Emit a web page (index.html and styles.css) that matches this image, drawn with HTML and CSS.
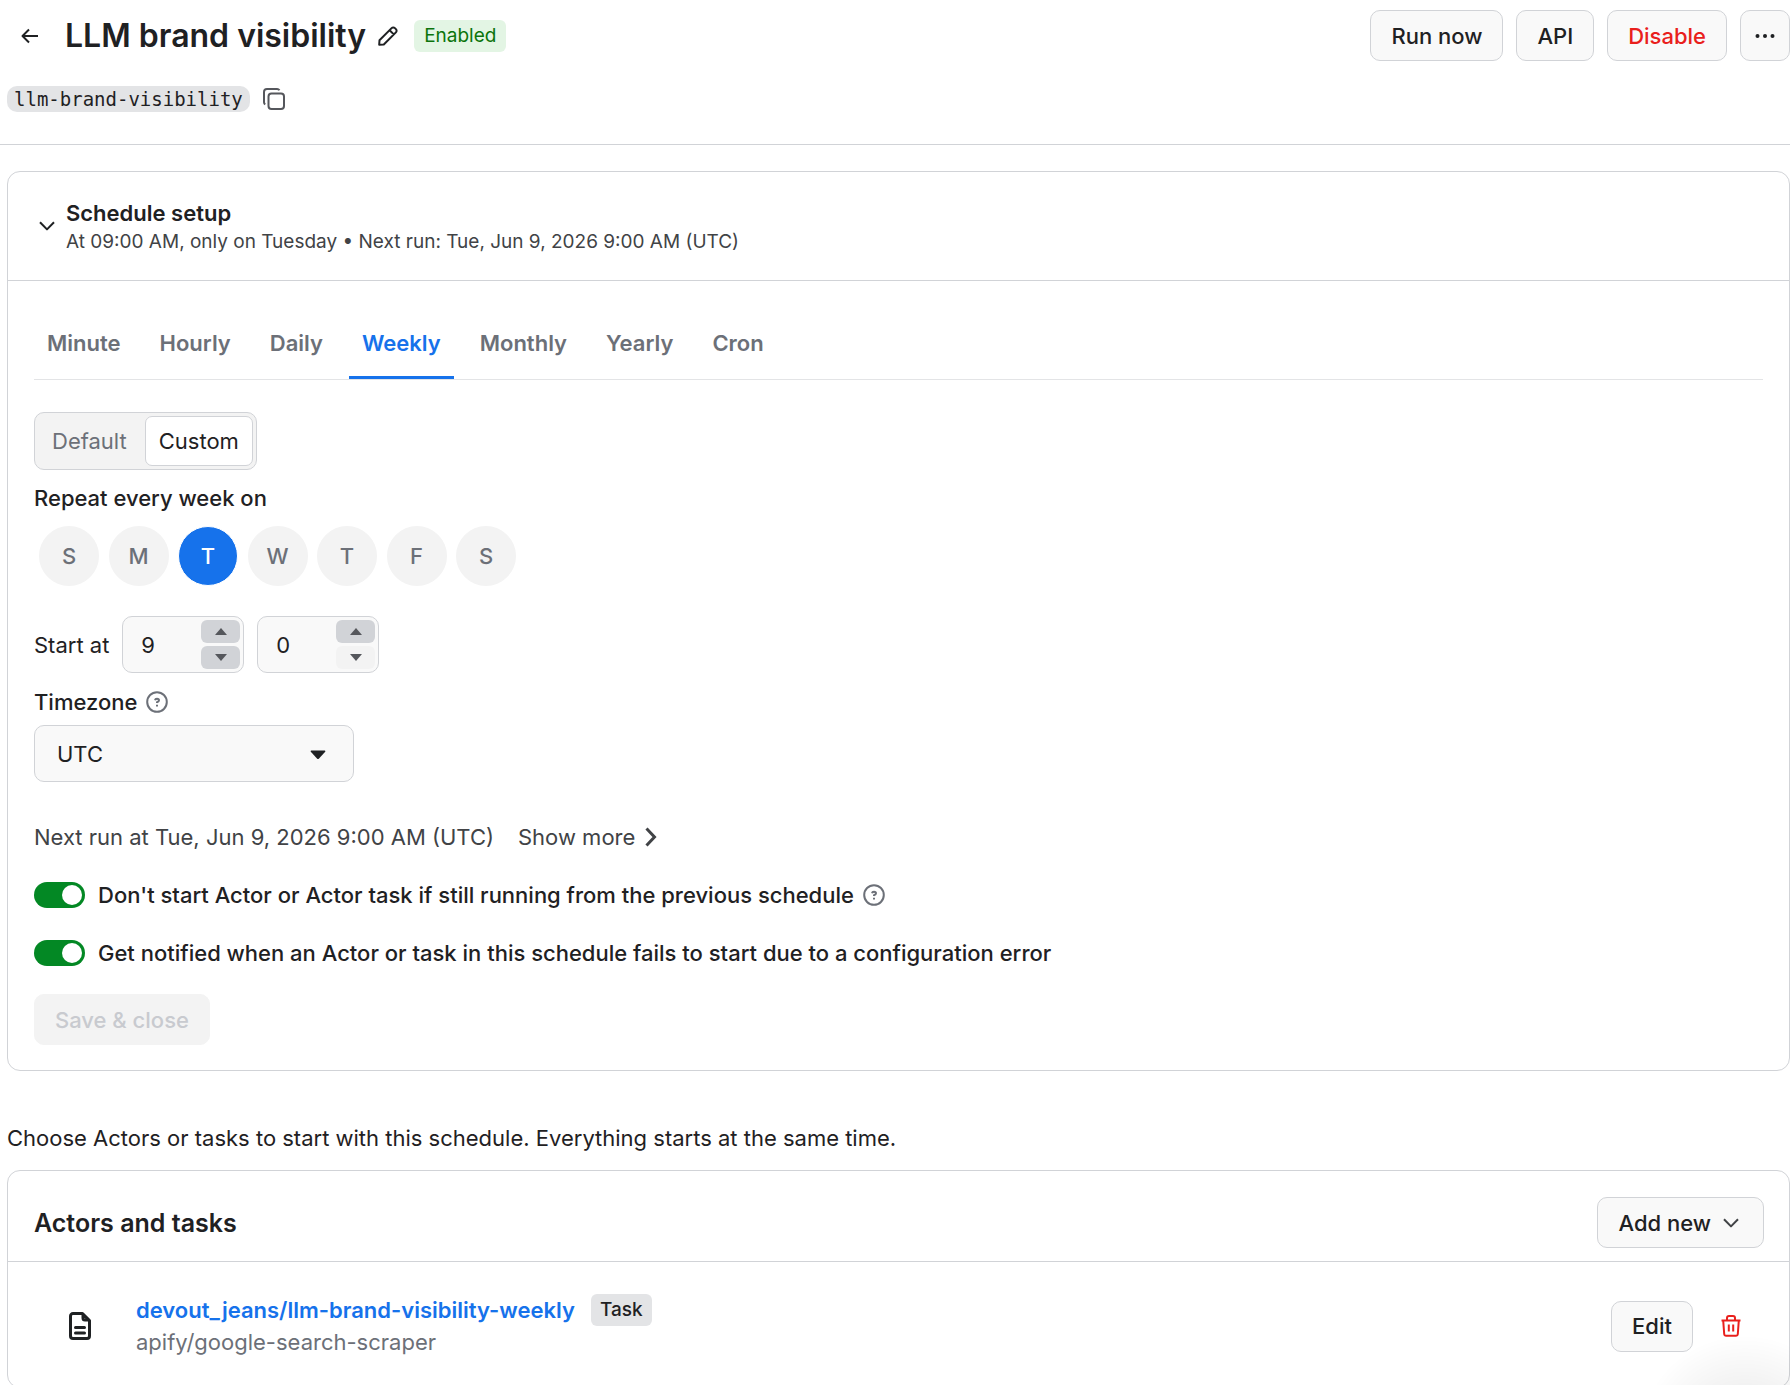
FILE: index.html
```html
<!DOCTYPE html>
<html lang="en">
<head>
    <meta charset="UTF-8">
    <meta name="viewport" content="width=device-width, initial-scale=1.0">
    <title>LLM brand visibility</title>
    <link rel="stylesheet" href="styles.css">
</head>
<body>
    <header class="page-header">
        <div class="header-row">
            <a class="back-link" href="#" aria-label="Back">
                <svg width="18" height="16" viewBox="0 0 18 16"><path d="M17 8H1.500M8 1.500L1.500 8L8 14.500"/></svg>
            </a>
            <h1>LLM brand visibility</h1>
            <button class="icon-btn edit-name" aria-label="Rename">
                <svg width="20" height="20" viewBox="0 0 20 20"><path d="M1.200 18.800L1.500 14.200L13.600 2.100a2.300 2.300 0 0 1 3.300 0l1 1a2.300 2.300 0 0 1 0 3.300L5.800 18.500ZM11.600 4.200L15.800 8.400"/></svg>
            </button>
            <span class="badge badge-enabled">Enabled</span>
            <div class="header-actions">
                <button class="btn">Run now</button>
                <button class="btn">API</button>
                <button class="btn btn-danger">Disable</button>
                <button class="btn btn-more" aria-label="More">
                    <svg width="20" height="6" viewBox="0 0 20 6"><circle cx="2.500" cy="3" r="2"/><circle cx="10" cy="3" r="2"/><circle cx="17.500" cy="3" r="2"/></svg>
                </button>
            </div>
        </div>
        <div class="slug-row">
            <code>llm-brand-visibility</code>
            <button class="icon-btn" aria-label="Copy">
                <svg width="22" height="22" viewBox="0 0 22 22"><rect x="5.500" y="5.500" width="15.500" height="15.500" rx="3"/><path d="M2.200 16.500A3 3 0 0 1 1 14V4a3 3 0 0 1 3-3h10a3 3 0 0 1 2.500 1.300"/></svg>
            </button>
        </div>
    </header>

    <main>
        <section class="card">
            <div class="card-header setup-header">
                <svg class="chevron" width="16" height="10" viewBox="0 0 16 10"><path d="M1 1.200L8 8.400L15 1.200"/></svg>
                <div>
                    <h2 class="setup-title">Schedule setup</h2>
                    <p class="setup-info">At 09:00 AM, only on Tuesday • Next run: Tue, Jun 9, 2026 9:00 AM (UTC)</p>
                </div>
            </div>
            <div class="setup-body">
                <nav class="tabs">
                    <a href="#" class="tab">Minute</a>
                    <a href="#" class="tab">Hourly</a>
                    <a href="#" class="tab">Daily</a>
                    <a href="#" class="tab active">Weekly</a>
                    <a href="#" class="tab">Monthly</a>
                    <a href="#" class="tab">Yearly</a>
                    <a href="#" class="tab">Cron</a>
                </nav>

                <div class="segmented">
                    <button class="segment">Default</button>
                    <button class="segment selected">Custom</button>
                </div>

                <h3 class="field-title">Repeat every week on</h3>
                <div class="days">
                    <button class="day">S</button>
                    <button class="day">M</button>
                    <button class="day selected">T</button>
                    <button class="day">W</button>
                    <button class="day">T</button>
                    <button class="day">F</button>
                    <button class="day">S</button>
                </div>

                <div class="start-at">
                    <label for="hour">Start at</label>
                    <div class="stepper">
                        <input type="number" id="hour" value="9" min="0" max="23">
                        <div class="stepper-btns">
                            <button data-step="1" aria-label="Increase hour"><svg width="12" height="7" viewBox="0 0 12 7"><path d="M0 7L6 0L12 7Z"/></svg></button>
                            <button data-step="-1" aria-label="Decrease hour"><svg width="12" height="7" viewBox="0 0 12 7"><path d="M0 0L6 7L12 0Z"/></svg></button>
                        </div>
                    </div>
                    <div class="stepper">
                        <input type="number" id="minute" aria-label="Minute" value="0" min="0" max="59">
                        <div class="stepper-btns">
                            <button data-step="1" aria-label="Increase minute"><svg width="12" height="7" viewBox="0 0 12 7"><path d="M0 7L6 0L12 7Z"/></svg></button>
                            <button data-step="-1" aria-label="Decrease minute" disabled><svg width="12" height="7" viewBox="0 0 12 7"><path d="M0 0L6 7L12 0Z"/></svg></button>
                        </div>
                    </div>
                </div>

                <div class="field-label">
                    <label for="timezone">Timezone</label>
                    <svg class="help" width="22" height="22" viewBox="0 0 22 22"><circle cx="11" cy="11" r="9.800"/><path d="M9 9.200Q9.300 7.800 11 7.800Q13 7.800 13 9.300Q13 10.600 11 11.300V12M11 13.800v1.800"/></svg>
                </div>
                <div class="select">
                    <select id="timezone">
                        <option>UTC</option>
                    </select>
                    <svg class="caret" width="16" height="10" viewBox="0 0 16 10"><path d="M1.200 0.500h13.600q1 .3.400 1.200L8.800 8.700q-.8.800-1.600 0L.8 1.700q-.6-.9.400-1.200Z"/></svg>
                </div>

                <div class="next-run">
                    <span>Next run at Tue, Jun 9, 2026 9:00 AM (UTC)</span>
                    <button class="show-more">Show more
                        <svg width="12" height="20" viewBox="0 0 12 20"><path d="M1.500 1.500L9.500 10L1.500 18.500"/></svg>
                    </button>
                </div>

                <div class="toggle-row">
                    <input type="checkbox" class="toggle" id="exclusive" checked>
                    <label for="exclusive">Don't start Actor or Actor task if still running from the previous schedule</label>
                    <svg class="help" width="22" height="22" viewBox="0 0 22 22"><circle cx="11" cy="11" r="9.800"/><path d="M9 9.200Q9.300 7.800 11 7.800Q13 7.800 13 9.300Q13 10.600 11 11.300V12M11 13.800v1.800"/></svg>
                </div>
                <div class="toggle-row">
                    <input type="checkbox" class="toggle" id="notify" checked>
                    <label for="notify">Get notified when an Actor or task in this schedule fails to start due to a configuration error</label>
                </div>

                <button class="btn btn-save" disabled>Save &amp; close</button>
            </div>
        </section>

        <p class="intro">Choose Actors or tasks to start with this schedule. Everything starts at the same time.</p>

        <section class="card">
            <div class="card-header tasks-header">
                <h2>Actors and tasks</h2>
                <button class="btn">Add new
                    <svg class="chevron" width="16" height="10" viewBox="0 0 16 10"><path d="M1 1.200L8 8.400L15 1.200"/></svg>
                </button>
            </div>
            <div class="task-row">
                <svg class="doc" width="22" height="28" viewBox="0 0 22 28"><path d="M13.500 1.500H4a2.500 2.500 0 0 0-2.500 2.500v20A2.500 2.500 0 0 0 4 26.500h14a2.500 2.500 0 0 0 2.500-2.500V8.500ZM14 2v4a2 2 0 0 0 2 2h4M6.500 15.500h9M6.500 21h9"/></svg>
                <div class="task-info">
                    <div class="task-name">
                        <a href="#">devout_jeans/llm-brand-visibility-weekly</a>
                        <span class="badge">Task</span>
                    </div>
                    <p>apify/google-search-scraper</p>
                </div>
                <button class="btn">Edit</button>
                <button class="icon-btn delete" aria-label="Delete">
                    <svg width="20" height="22" viewBox="0 0 20 22"><path d="M.5 5.500h19M6 5V3a2 2 0 0 1 2-2h4a2 2 0 0 1 2 2v2M2.200 5.500l1 13.500a2 2 0 0 0 2 1.800h9.600a2 2 0 0 0 2-1.800l1-13.500M7.800 9.500v7M12.200 9.500v7"/></svg>
                </button>
            </div>
        </section>
    </main>

    <div class="chat-shadow"></div>

    <script>
        document.querySelectorAll('[data-step]').forEach(button => {
            button.addEventListener('click', () => {
                const input = button.closest('.stepper').querySelector('input');
                const next = Number(input.value) + Number(button.dataset.step);
                if (next < input.min || next > input.max) return
                input.value = next;
                button.parentElement.querySelector('[data-step="-1"]').disabled = next === 0;
            })
        })
    </script>
</body>
</html>
```

FILE: styles.css
```css
* {
    box-sizing: border-box;
}
html {
    overflow: hidden;
}
body {
    margin: 0;
    background: #fff;
    color: #1f2123;
    font-family: Inter, sans-serif;
    font-size: 22px;
    line-height: 32px;
}
h1, h2, h3, p {
    margin: 0;
}
a {
    text-decoration: none;
}
button, input, select {
    font: inherit;
    color: inherit;
}
button {
    cursor: pointer;
}
svg {
    flex: none;
    fill: none;
    stroke: currentColor;
    stroke-width: 2;
    stroke-linejoin: round;
}

/* header */
.page-header {
    padding: 10px 0 32px 7px;
    border-bottom: 1px solid #d1d3d7;
}
.header-row {
    display: flex;
    align-items: center;
}
.back-link {
    display: flex;
    color: inherit;
    margin: 0 26px 0 14px;
}
h1 {
    font-size: 32px;
    line-height: 40px;
    font-weight: 600;
}
.icon-btn {
    display: flex;
    padding: 0;
    border: 0;
    background: none;
}
.edit-name {
    margin: 0 16px 0 12px;
}
.badge {
    padding: 0 9px;
    border-radius: 6px;
    background: #e3e4e6;
    font-size: 19px;
}
.badge-enabled {
    padding: 0 10px;
    background: #e3f5e4;
    color: #0b740b;
}
.header-actions {
    display: flex;
    gap: 13px;
    margin-left: auto;
}
.btn {
    display: flex;
    align-items: center;
    gap: 12px;
    height: 51px;
    padding: 0 20px;
    border: 1px solid #d1d3d7;
    border-radius: 10px;
    background: #f9f9f9;
    font-weight: 500;
}
.btn-danger {
    color: #e9201c;
}
.btn-more {
    padding: 0 14px;
}
.btn-more svg {
    fill: currentColor;
    stroke: none;
}
.slug-row {
    display: flex;
    align-items: center;
    gap: 13px;
    margin-top: 25px;
    color: #55575c;
}
code {
    padding: 0 7px;
    border-radius: 10px;
    background: #e3e4e6;
    color: #1f2123;
    font-family: "DejaVu Sans Mono", monospace;
    font-size: 19px;
    line-height: 26px;
}

/* cards */
main {
    padding: 26px 0 0 7px;
}
.card {
    border: 1px solid #d1d3d7;
    border-radius: 13px;
}
.card-header {
    display: flex;
    align-items: center;
    padding: 25px;
    border-bottom: 1px solid #d1d3d7;
}
.setup-header {
    gap: 11px;
    padding-left: 31px;
}
.setup-title {
    font-size: 22px;
    line-height: 32px;
    font-weight: 600;
}
.setup-info {
    font-size: 19px;
    line-height: 26px;
    color: #414346;
}
.setup-body {
    padding: 32px 26px 25px;
}

.tabs {
    display: flex;
    gap: 13px;
    border-bottom: 1px solid #e3e4e6;
}
.tab {
    padding: 14px 13px 17px;
    border-bottom: 3px solid transparent;
    color: #6c7078;
    font-weight: 600;
}
.tab.active {
    border-color: #1672eb;
    color: #1672eb;
}

.segmented {
    display: flex;
    gap: 4px;
    width: fit-content;
    margin-top: 32px;
    padding: 3px;
    border: 1px solid #d1d3d7;
    border-radius: 10px;
    background: #f3f3f3;
}
.segment {
    height: 50px;
    padding: 0 13px;
    border: 1px solid transparent;
    border-radius: 7px;
    background: none;
    color: #6c7078;
}
.segment.selected {
    border-color: #d1d3d7;
    background: #fff;
    color: #1f2123;
}
.field-title {
    margin-top: 12px;
    font-size: 22px;
    font-weight: 500;
}
.days {
    display: flex;
    justify-content: space-between;
    width: 477px;
    margin: 12px 0 0 5px;
}
.day {
    width: 60px;
    height: 60px;
    padding: 0;
    border: 1px solid #f3f3f3;
    border-radius: 50%;
    background: #f3f3f3;
    color: #6c7078;
    font-weight: 500;
}
.day.selected {
    border-color: #fff;
    background: #1672eb;
    color: #fff;
}

.start-at {
    display: flex;
    align-items: center;
    gap: 13px;
    margin-top: 30px;
}
.stepper {
    display: flex;
    width: 122px;
    height: 57px;
    padding: 3px 3px 3px 18px;
    border: 1px solid #d1d3d7;
    border-radius: 10px;
    background: #f9f9f9;
}
.stepper input {
    flex: 1;
    min-width: 0;
    padding: 0;
    border: 0;
    outline: 0;
    background: none;
    appearance: textfield;
}
.stepper input::-webkit-inner-spin-button {
    appearance: none;
}
.stepper-btns {
    display: grid;
    gap: 3px;
    width: 39px;
}
.stepper-btns button {
    display: flex;
    align-items: center;
    justify-content: center;
    padding: 0;
    border: 0;
    border-radius: 6px;
    background: #d1d3d7;
    color: #55575c;
}
.stepper-btns button:disabled {
    background: #f3f3f3;
}
.stepper-btns svg, .caret {
    fill: currentColor;
    stroke: none;
}

.field-label {
    display: flex;
    align-items: center;
    gap: 9px;
    margin-top: 13px;
    font-weight: 500;
}
.help {
    color: #6c7078;
}
.select {
    position: relative;
    width: 320px;
    margin-top: 7px;
}
.select select {
    display: block;
    width: 100%;
    height: 57px;
    padding: 0 22px;
    border: 1px solid #d1d3d7;
    border-radius: 10px;
    background: #f9f9f9;
    appearance: none;
}
.caret {
    position: absolute;
    right: 28px;
    top: 25px;
    pointer-events: none;
}

.next-run {
    display: flex;
    gap: 24px;
    margin-top: 39px;
    color: #414346;
}
.show-more {
    display: flex;
    align-items: center;
    gap: 10px;
    padding: 0;
    border: 0;
    background: none;
}
.show-more svg {
    stroke-width: 3;
    stroke-linejoin: miter;
}
.toggle-row {
    display: flex;
    align-items: center;
    margin-top: 26px;
    font-weight: 500;
}
.toggle-row .help {
    margin-left: 9px;
}
.toggle {
    width: 51px;
    height: 26px;
    margin: 0 13px 0 0;
    padding: 3px;
    border-radius: 13px;
    background: #d1d3d7;
    appearance: none;
}
.toggle::before {
    content: "";
    display: block;
    width: 20px;
    height: 20px;
    border-radius: 50%;
    background: #fff;
}
.toggle:checked {
    background: #038824;
}
.toggle:checked::before {
    margin-left: auto;
}
.btn-save {
    margin-top: 25px;
    border-color: #f3f3f3;
    background: #f3f3f3;
    color: #c8cacf;
}

.intro {
    margin: 51px 0 16px;
}

/* actors and tasks */
.tasks-header {
    justify-content: space-between;
    padding: 26px 25px 13px 26px;
}
.tasks-header h2 {
    font-size: 25px;
    font-weight: 600;
}
.tasks-header .chevron {
    margin-right: 4px;
    color: #414346;
}
.task-row {
    display: flex;
    align-items: center;
    padding: 32px 48px 29px 61px;
}
.doc {
    margin-right: 45px;
    stroke-width: 3;
    stroke-linecap: round;
}
.task-info {
    flex: 1;
    color: #6c7078;
}
.task-name {
    display: flex;
    align-items: center;
    gap: 16px;
}
.task-name a {
    color: #1672eb;
    font-weight: 600;
}
.task-name .badge {
    color: #1f2123;
    font-weight: 500;
}
.delete {
    margin-left: 28px;
    color: #e9201c;
}

/* soft shadow of the chat launcher that sits below the fold */
.chat-shadow {
    position: fixed;
    right: -60px;
    bottom: -150px;
    width: 210px;
    height: 200px;
    border-radius: 50%;
    background: radial-gradient(closest-side, rgba(0, 0, 0, 0.1), transparent);
    pointer-events: none;
}
```
